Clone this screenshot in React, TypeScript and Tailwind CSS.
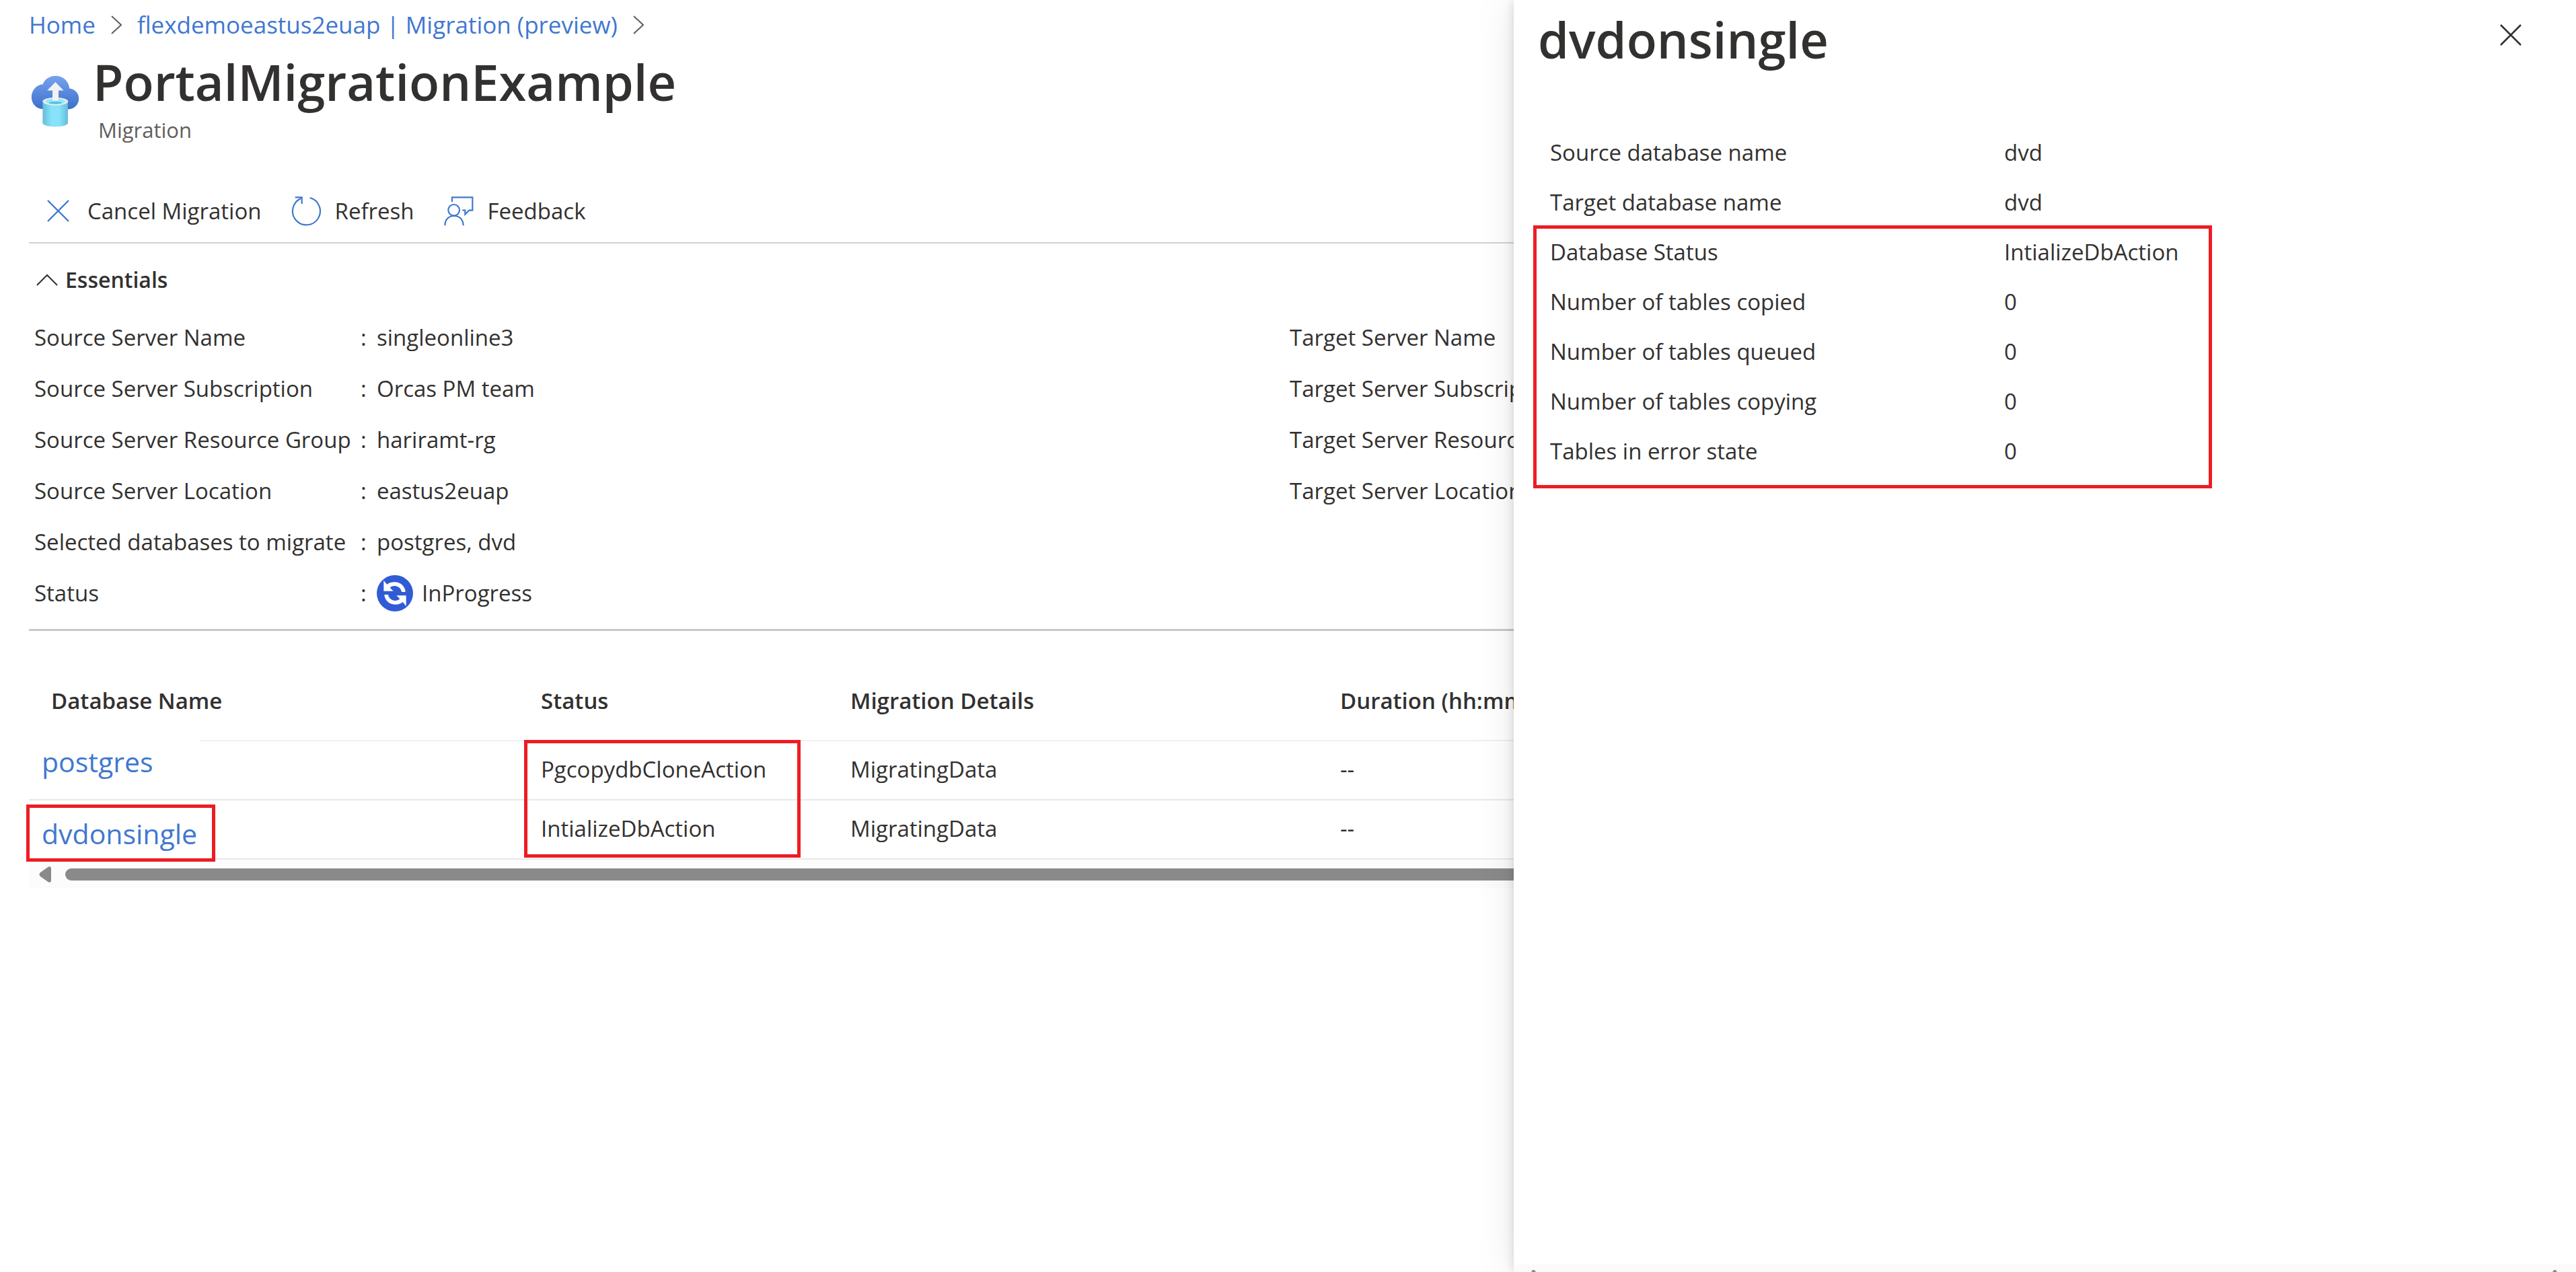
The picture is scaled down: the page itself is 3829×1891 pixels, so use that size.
import React from 'react';

const sourceDetails = [
  { label: 'Source Server Name', value: 'singleonline3' },
  { label: 'Source Server Subscription', value: 'Orcas PM team' },
  { label: 'Source Server Resource Group', value: 'hariramt-rg' },
  { label: 'Source Server Location', value: 'eastus2euap' },
  { label: 'Selected databases to migrate', value: 'postgres, dvd' },
  { label: 'Status', value: 'InProgress', inProgress: true },
];

const targetDetails = [
  'Target Server Name',
  'Target Server Subscription',
  'Target Server Resource Group',
  'Target Server Location',
];

const nameDetails = [
  { label: 'Source database name', value: 'dvd' },
  { label: 'Target database name', value: 'dvd' },
];

const progressDetails = [
  { label: 'Database Status', value: 'IntializeDbAction' },
  { label: 'Number of tables copied', value: '0' },
  { label: 'Number of tables queued', value: '0' },
  { label: 'Number of tables copying', value: '0' },
  { label: 'Tables in error state', value: '0' },
];

function BreadcrumbChevron() {
  return (
    <svg className="h-7 w-4" viewBox="0 0 16 28" fill="none" stroke="#605e5c" strokeWidth="2" aria-hidden="true">
      <path d="M1 1 L15 14 L1 27" />
    </svg>
  );
}

function MigrationIcon() {
  return (
    <svg className="mt-[34px] h-[77px] w-[72px] shrink-0" viewBox="45 64 216 232" aria-hidden="true">
      <defs>
        <linearGradient id="cloud" x1="0" y1="0" x2="0" y2="1">
          <stop offset="0" stopColor="#77a3ee" />
          <stop offset="1" stopColor="#3b70cc" />
        </linearGradient>
        <linearGradient id="cylinder" x1="0" y1="0" x2="1" y2="0">
          <stop offset="0" stopColor="#65bdd9" />
          <stop offset="0.35" stopColor="#87e3fb" />
          <stop offset="0.65" stopColor="#87e3fb" />
          <stop offset="1" stopColor="#65bdd9" />
        </linearGradient>
      </defs>
      <path
        fill="url(#cloud)"
        d="M98 215 C70 215 47 192 47 162 C47 132 68 106 98 104 C106 80 130 66 156 66 C188 66 214 90 217 123 C241 125 259 144 259 168 C259 194 240 215 212 216 Z"
      />
      <path fill="url(#cylinder)" d="M97 181 V278 C97 287 122 294 154 294 C185 294 210 287 210 278 V181 Z" />
      <ellipse cx="154" cy="181" rx="57" ry="18" fill="#e9e9ea" />
      <ellipse cx="154" cy="181" rx="44" ry="12" fill="#8be9ff" />
      <ellipse cx="154" cy="187" rx="30" ry="5" fill="#55bad8" />
      <path fill="#f2f2f3" d="M154 94 L191 132 H168 V177 H141 V132 H117 Z" />
    </svg>
  );
}

function CancelIcon() {
  return (
    <svg className="size-11" viewBox="0 0 44 44" fill="none" stroke="#3f78d0" strokeWidth="2.4" aria-hidden="true">
      <path d="M6 6 L37 37 M37 6 L6 37" />
    </svg>
  );
}

function RefreshIcon() {
  return (
    <svg className="size-11" viewBox="48 44 132 132" fill="none" stroke="#3f78d0" strokeWidth="6.5" aria-hidden="true">
      <path d="M131 50 A61.500 61.500 0 1 1 91 53" />
      <path d="M65 48 H95 V77" />
    </svg>
  );
}

function FeedbackIcon() {
  return (
    <svg className="size-11" viewBox="716 44 132 132" fill="none" stroke="#3f78d0" strokeWidth="6.5" aria-hidden="true">
      <path d="M752 69 V48 H843 V106 H828 L810 124 V106 H798" />
      <circle cx="760" cy="105" r="25" />
      <path d="M720 174 C720 147 737 131 761 131 S802 147 802 174" />
    </svg>
  );
}

function SyncIcon() {
  const arrow =
    'M61 57 L76 75 C86 66 98 64 111 64 C136 64 157 84 158 108 L141 108 C138 92 125 81 110 81 C102 81 95 83 89 89 L104 104 H61 Z';
  return (
    <svg className="size-[54px]" viewBox="30 33 162 162" aria-hidden="true">
      <circle cx="111" cy="114" r="81" fill="#315bd5" />
      <path d={arrow} fill="#fff" />
      <path d={arrow} fill="#fff" transform="rotate(180 111 114)" />
    </svg>
  );
}

function DetailRow({ label, value }: { label: string; value: string }) {
  return (
    <div className="grid h-[74px] grid-cols-[675px_1fr] items-center pl-[54px]">
      <dt>{label}</dt>
      <dd>{value}</dd>
    </div>
  );
}

export default function App() {
  return (
    <div className="flex min-h-screen overflow-hidden bg-white font-['Open_Sans',sans-serif] text-[33px] leading-[46px] text-[#323130]">
      <main className="min-w-0 flex-1 overflow-hidden whitespace-nowrap">
        <nav aria-label="Breadcrumb" className="flex items-center gap-[23px] pt-[13px] pl-[43px] text-[35px] leading-[48px] text-[#3f78d0]">
          <a href="#home">Home</a>
          <BreadcrumbChevron />
          <a href="#migration">flexdemoeastus2euap | Migration (preview)</a>
          <BreadcrumbChevron />
        </nav>

        <header className="mt-[17px] flex gap-5 pl-[46px]">
          <MigrationIcon />
          <div>
            <h1 className="text-[74px] leading-[88px] font-semibold">PortalMigrationExample</h1>
            <p className="mt-[7px] pl-2 text-[31px] leading-[40px] text-[#605e5c]">Migration</p>
          </div>
        </header>

        <div role="toolbar" aria-label="Migration actions" className="mt-[55px] ml-[43px] flex h-[94px] items-center gap-11 border-b-2 border-[#d2d2d2] pl-[22px]">
          <button type="button" className="flex items-center gap-[21px]">
            <CancelIcon />
            Cancel Migration
          </button>
          <button type="button" className="flex items-center gap-[21px]">
            <RefreshIcon />
            Refresh
          </button>
          <button type="button" className="flex items-center gap-[21px]">
            <FeedbackIcon />
            Feedback
          </button>
        </div>

        <section className="ml-[43px] border-b-3 border-[#c8c8c8] pt-[31px] pb-[15px]">
          <h2>
            <button type="button" aria-expanded="true" className="flex items-center gap-[11px] pl-[11px] text-[32px] font-semibold">
              <svg className="h-[18px] w-8" viewBox="0 0 32 18" fill="none" stroke="#323130" strokeWidth="2" aria-hidden="true">
                <path d="M1 17 L16 2 L31 17" />
              </svg>
              Essentials
            </button>
          </h2>
          <div className="mt-[25px] grid grid-cols-[1866px_1fr] pl-2">
            <dl>
              {sourceDetails.map((row) => (
                <div key={row.label} className="grid h-[76px] grid-cols-[485px_24px_1fr] items-center">
                  <dt>{row.label}</dt>
                  <span aria-hidden="true">:</span>
                  <dd className="flex items-center gap-[13px]">
                    {row.inProgress && <SyncIcon />}
                    {row.value}
                  </dd>
                </div>
              ))}
            </dl>
            <dl>
              {targetDetails.map((label) => (
                <dt key={label} className="flex h-[76px] items-center">
                  {label}
                </dt>
              ))}
            </dl>
          </div>
        </section>

        <section className="mt-[46px] ml-[43px]">
          <table className="w-full table-fixed border-separate border-spacing-0 border-b-2 border-[#e8e8e8] text-left">
            <colgroup>
              <col className="w-[733px]" />
              <col className="w-[460px]" />
              <col className="w-[728px]" />
              <col />
            </colgroup>
            <thead>
              <tr className="h-[116px]">
                <th scope="col" className="pl-[33px] font-semibold">Database Name</th>
                <th scope="col" className="pl-7 font-semibold">Status</th>
                <th scope="col" className="pl-7 font-semibold">Migration Details</th>
                <th scope="col" className="pl-7 font-semibold">Duration (hh:mm:ss)</th>
              </tr>
            </thead>
            <tbody>
              <tr className="h-[88px]">
                <td className="relative border-t-2 border-[#f0f0f0]">
                  <a href="#postgres" className="absolute top-[-2px] left-px flex h-[88px] w-[253px] items-center bg-white pb-6 pl-[18px] text-[41px] text-[#3f78d0]">
                    postgres
                  </a>
                </td>
                <td className="relative border-t-2 border-[#f0f0f0] pb-0.5 pl-7">
                  PgcopydbCloneAction
                  <span aria-hidden="true" className="pointer-events-none absolute top-[-2px] left-[3px] z-10 h-[175px] w-[411px] border-5 border-[#ed1c24]" />
                </td>
                <td className="border-t-2 border-[#f0f0f0] pb-0.5 pl-7">MigratingData</td>
                <td className="border-t-2 border-[#f0f0f0] pb-0.5 pl-7">--</td>
              </tr>
              <tr className="h-[88px]">
                <td className="relative border-t-2 border-[#e8e8e8]">
                  <a href="#dvdonsingle" className="absolute top-[6px] left-[-4px] flex h-[85px] w-[281px] items-center border-5 border-[#ed1c24] bg-white pl-[18px] text-[41px] text-[#3f78d0]">
                    dvdonsingle
                  </a>
                </td>
                <td className="border-t-2 border-[#e8e8e8] pb-0.5 pl-7">IntializeDbAction</td>
                <td className="border-t-2 border-[#e8e8e8] pb-0.5 pl-7">MigratingData</td>
                <td className="border-t-2 border-[#e8e8e8] pb-0.5 pl-7">--</td>
              </tr>
            </tbody>
          </table>
          <div className="flex h-[43px] items-center gap-[21px] bg-[#fcfcfc] pl-[15px]">
            <svg className="h-6 w-[18px]" viewBox="0 0 18 24" fill="#8a8a8a" aria-hidden="true">
              <path d="M18 2 V22 Q17 24.500 14 23.500 L2 15 Q-1 12 2 9 L14 0.500 Q17 -0.500 18 2 Z" />
            </svg>
            <div className="h-[18px] flex-1 rounded-l-full bg-[#8a8a8a]" />
          </div>
        </section>
      </main>

      <aside className="relative z-20 flex w-[1579px] shrink-0 flex-col bg-white shadow-[0_0_56px_rgba(0,0,0,0.1),0_0_14px_rgba(0,0,0,0.14)]">
        <header className="flex items-start justify-between pt-[15px] pr-[73px] pl-9">
          <h2 className="text-[74px] leading-[88px] font-semibold">dvdonsingle</h2>
          <button type="button" aria-label="Close" className="mt-[13px]">
            <svg className="size-12" viewBox="0 0 48 48" fill="none" stroke="#323130" strokeWidth="2.5" aria-hidden="true">
              <path d="M9 9 L39 39 M39 9 L9 39" />
            </svg>
          </button>
        </header>
        <dl className="mt-[87px]">
          {nameDetails.map((row) => (
            <DetailRow key={row.label} {...row} />
          ))}
        </dl>
        <dl className="relative">
          {progressDetails.map((row) => (
            <DetailRow key={row.label} {...row} />
          ))}
          <div aria-hidden="true" className="pointer-events-none absolute top-[-3px] left-[29px] h-[391px] w-[1009px] border-5 border-[#ed1c24]" />
        </dl>
        <div className="mt-auto flex h-[11px] items-end justify-between bg-[#fbfbfb] pr-7 pl-[26px]">
          <svg className="h-[3px] w-[7px]" viewBox="0 0 7 3" fill="#8a8a8a" aria-hidden="true">
            <path d="M0 3 L2 0 H5 L7 3 Z" />
          </svg>
          <svg className="h-[3px] w-[7px]" viewBox="0 0 7 3" fill="#8a8a8a" aria-hidden="true">
            <path d="M0 3 L2 0 H5 L7 3 Z" />
          </svg>
        </div>
      </aside>
    </div>
  );
}
